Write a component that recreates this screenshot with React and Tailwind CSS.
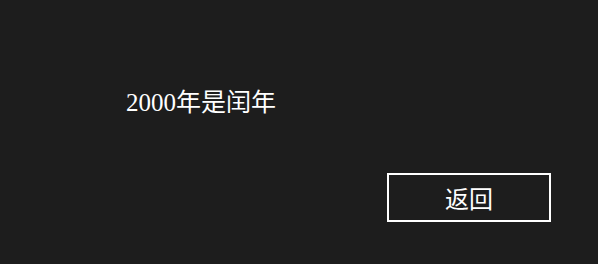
import React from 'react';

function App() {
  return (
    <div
      className="h-screen w-full bg-[#1d1d1d] text-white flex flex-col"
      style={{ fontFamily: '"Liberation Serif", "Noto Sans CJK SC", serif' }}
    >
      <div className="pt-[90px] pl-[126px] text-[25px] leading-[25px]">2000年是闰年</div>
      <div className="flex justify-end pr-[47px] pt-[58px]">
        <button
          className="w-[164px] h-[49px] border-2 border-white flex items-center justify-center text-[24px] leading-none"
          style={{ fontFamily: '"Noto Sans CJK SC", sans-serif' }}
        >
          返回
        </button>
      </div>
    </div>
  );
}

export default App;
